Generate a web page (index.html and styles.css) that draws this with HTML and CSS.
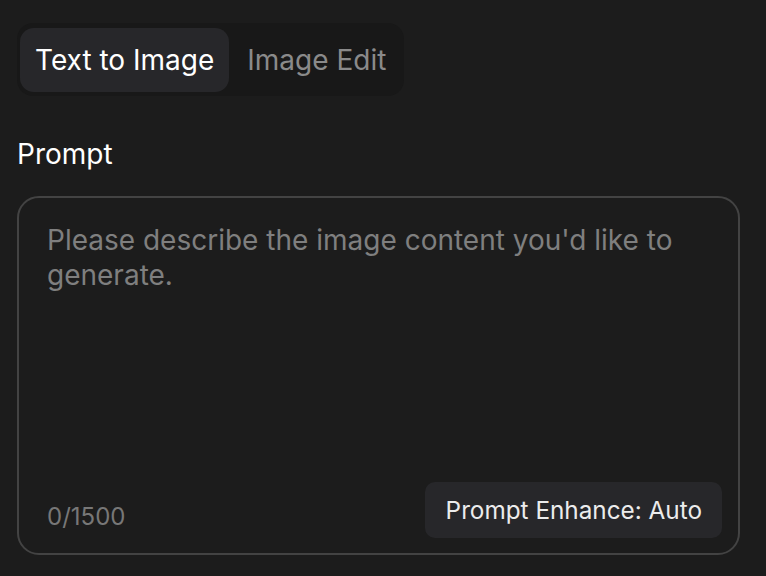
FILE: index.html
```html
<!DOCTYPE html>
<html lang="en">
<head>
<meta charset="utf-8">
<link rel="stylesheet" href="styles.css">
</head>
<body>
<div class="page">
  <div class="tabs">
    <div class="tab active">Text to Image</div>
    <div class="tab">Image Edit</div>
  </div>
  <div class="label">Prompt</div>
  <div class="prompt-box">
    <div class="placeholder">Please describe the image content you'd like to generate.</div>
    <div class="footer">
      <span class="counter">0/1500</span>
      <button class="enhance">Prompt Enhance: Auto</button>
    </div>
  </div>
</div>
</body>
</html>
```
FILE: styles.css
```css
html, body {
  margin: 0;
  padding: 0;
  background: #1c1c1c;
  font-family: Inter, "Noto Sans", sans-serif;
}
.page {
  width: 766px;
  height: 576px;
  box-sizing: border-box;
  padding: 23px 26px 0 17px;
  display: flex;
  flex-direction: column;
}
.tabs {
  align-self: flex-start;
  display: flex;
  background: #181818;
  border-radius: 16px;
  padding: 5px 18px 4px 3px;
  gap: 18px;
}
.tab {
  height: 64px;
  display: flex;
  align-items: center;
  padding: 0 15px;
  font-size: 28px;
  color: #8a8a8a;
  border-radius: 14px;
}
.tab.active {
  background: #27272a;
  color: #ffffff;
}
.tab:not(.active) {
  padding: 0;
}
.label {
  margin-top: 41px;
  font-size: 28px;
  color: #ffffff;
  line-height: 34px;
}
.prompt-box {
  margin-top: 25px;
  height: 359px;
  box-sizing: border-box;
  border: 2px solid #434343;
  border-radius: 22px;
  padding: 25px 16px 15px 28px;
  display: flex;
  flex-direction: column;
  justify-content: space-between;
}
.placeholder {
  font-size: 28px;
  line-height: 35px;
  color: #7f7f7f;
}
.footer {
  display: flex;
  justify-content: space-between;
  align-items: center;
}
.counter {
  font-size: 24px;
  color: #777777;
  margin-top: 12px;
}
.enhance {
  font-family: inherit;
  background: #27272a;
  color: #ececec;
  border: none;
  border-radius: 10px;
  height: 56px;
  padding: 0 20px 0 21px;
  font-size: 24.3px;
}
```
